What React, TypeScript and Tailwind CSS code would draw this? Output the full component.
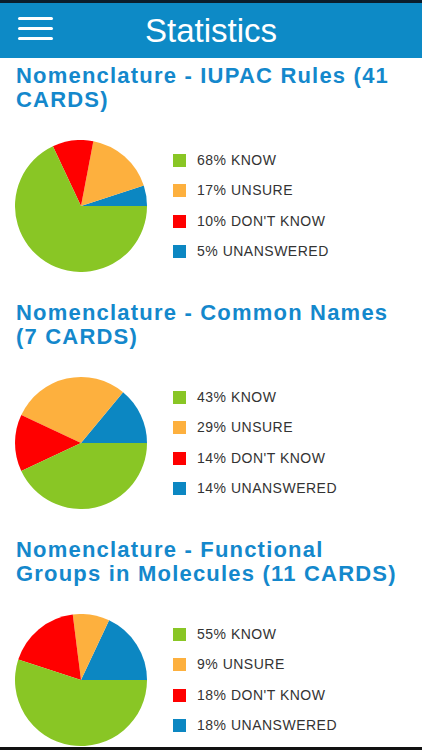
import React from "react";

interface Slice {
  label: string;
  pct: number;
  color: string;
}

interface Deck {
  title: string;
  slices: Slice[];
}

const GREEN = "#89c625";
const ORANGE = "#fdb03e";
const RED = "#ff0000";
const BLUE = "#0c87c2";

const decks: Deck[] = [
  {
    title: "Nomenclature - IUPAC Rules (41 CARDS)",
    slices: [
      { label: "KNOW", pct: 68, color: GREEN },
      { label: "UNSURE", pct: 17, color: ORANGE },
      { label: "DON'T KNOW", pct: 10, color: RED },
      { label: "UNANSWERED", pct: 5, color: BLUE },
    ],
  },
  {
    title: "Nomenclature - Common Names (7 CARDS)",
    slices: [
      { label: "KNOW", pct: 43, color: GREEN },
      { label: "UNSURE", pct: 29, color: ORANGE },
      { label: "DON'T KNOW", pct: 14, color: RED },
      { label: "UNANSWERED", pct: 14, color: BLUE },
    ],
  },
  {
    title: "Nomenclature - Functional Groups in Molecules (11 CARDS)",
    slices: [
      { label: "KNOW", pct: 55, color: GREEN },
      { label: "UNSURE", pct: 9, color: ORANGE },
      { label: "DON'T KNOW", pct: 18, color: RED },
      { label: "UNANSWERED", pct: 18, color: BLUE },
    ],
  },
];

const Pie = ({ slices }: { slices: Slice[] }) => {
  const r = 66;
  const c = 66;
  // counter-clockwise from 3 o'clock: unanswered, unsure, don't know, know
  const order = [slices[3], slices[1], slices[2], slices[0]];
  const total = order.reduce((s, x) => s + x.pct, 0);
  let start = 0;
  const point = (a: number) => [c + r * Math.cos(a), c - r * Math.sin(a)];

  return (
    <svg width="132" height="132" viewBox="0 0 132 132" className="shrink-0">
      {order.map((s) => {
        const sweep = (s.pct / total) * Math.PI * 2;
        const end = start + sweep;
        const [x1, y1] = point(start);
        const [x2, y2] = point(end);
        const large = sweep > Math.PI ? 1 : 0;
        const d = `M${c} ${c} L${x1} ${y1} A${r} ${r} 0 ${large} 0 ${x2} ${y2} Z`;
        start = end;
        return <path key={s.label} d={d} fill={s.color} />;
      })}
    </svg>
  );
};

const Legend = ({ slices }: { slices: Slice[] }) => (
  <div className="flex flex-col">
    {slices.map((s) => (
      <div key={s.label} className="flex items-center h-[30.4px]">
        <div className="w-[13px] h-[13px]" style={{ backgroundColor: s.color }} />
        <span className="ml-[11px] text-[14px] tracking-[0.5px] text-[#333]">
          {s.pct}% {s.label}
        </span>
      </div>
    ))}
  </div>
);

export default function App() {
  return (
    <div
      className="w-[422px] h-[750px] overflow-hidden flex flex-col bg-white"
      style={{ fontFamily: '"Liberation Sans", Arial, sans-serif' }}
    >
      <div className="h-[3px] bg-[#0b1d2c]" />
      {/* Header */}
      <div className="h-[55px] bg-[#0d8ac6] relative flex items-center justify-center">
        <div className="absolute left-[18px] top-[14px] flex flex-col gap-[7px]">
          <span className="block w-[35px] h-[3px] rounded-full bg-white" />
          <span className="block w-[35px] h-[3px] rounded-full bg-white" />
          <span className="block w-[35px] h-[3px] rounded-full bg-white" />
        </div>
        <h1 className="text-white text-[33px] leading-none">Statistics</h1>
      </div>

      {/* Decks */}
      <div className="flex-1 overflow-hidden px-[16px] pt-[6px]">
        {decks.map((deck, i) => (
          <section key={deck.title} className={i > 0 ? "mt-[29px]" : ""}>
            <h2 className="text-[#1488cc] font-bold text-[22px] leading-[24px] tracking-[1.2px]">
              {deck.title}
            </h2>
            <div className="mt-[28px] flex items-center -ml-[1px]">
              <Pie slices={deck.slices} />
              <div className="ml-[26px]">
                <Legend slices={deck.slices} />
              </div>
            </div>
          </section>
        ))}
      </div>
      <div className="h-[3px] bg-[#111]" />
    </div>
  );
}
